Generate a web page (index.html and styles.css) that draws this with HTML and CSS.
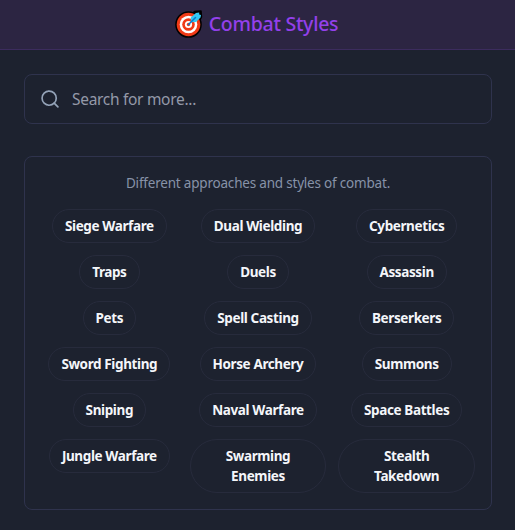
FILE: index.html
```html
<!DOCTYPE html>
<html lang="en">
<head>
  <meta charset="UTF-8">
  <meta name="viewport" content="width=device-width, initial-scale=1.0">
  <title>Combat Styles</title>
  <link rel="stylesheet" href="styles.css">
</head>
<body>
  <header class="header">
    <svg class="target" viewBox="0 0 28 28">
      <path d="M17 4 19.500 1.500 26 1 26.500 7 24.500 11" fill="#000" stroke="#000" stroke-width="1.500" stroke-linejoin="round"/>
      <circle cx="13.500" cy="14.500" r="13.300" fill="#000"/>
      <circle cx="13.500" cy="14.500" r="11.800" fill="#f03a17"/>
      <circle cx="13.500" cy="14.500" r="8.800" fill="#fff"/>
      <circle cx="13.500" cy="14.500" r="6.300" fill="#f03a17"/>
      <circle cx="13.500" cy="14.500" r="3.600" fill="#fff"/>
      <circle cx="13.500" cy="14.500" r="1.700" fill="#f03a17"/>
      <path d="M15.800 12.200V7.500L21 3 24.200 2.500V4.500L26 5 25.500 7.500 21 12Z" fill="#35c9f4"/>
      <path d="M13.500 14.500 20.500 7.500" stroke="#087bcd" stroke-width="1.500" stroke-linecap="round"/>
    </svg>
    <h1>Combat Styles</h1>
  </header>

  <main class="content">
    <!-- Search -->
    <label class="search">
      <svg class="search-icon" viewBox="0 0 24 24">
        <circle cx="11" cy="11" r="8.500"/>
        <path d="m21.500 21.500-4.500-4.500"/>
      </svg>
      <input type="text" placeholder="Search for more...">
    </label>

    <!-- Style list -->
    <section class="card">
      <p class="description">Different approaches and styles of combat.</p>
      <div class="tags">
        <button class="tag">Siege Warfare</button>
        <button class="tag">Dual Wielding</button>
        <button class="tag">Cybernetics</button>
        <button class="tag">Traps</button>
        <button class="tag">Duels</button>
        <button class="tag">Assassin</button>
        <button class="tag">Pets</button>
        <button class="tag">Spell Casting</button>
        <button class="tag">Berserkers</button>
        <button class="tag">Sword Fighting</button>
        <button class="tag">Horse Archery</button>
        <button class="tag">Summons</button>
        <button class="tag">Sniping</button>
        <button class="tag">Naval Warfare</button>
        <button class="tag">Space Battles</button>
        <button class="tag">Jungle Warfare</button>
        <button class="tag">Swarming Enemies</button>
        <button class="tag">Stealth Takedown</button>
      </div>
    </section>
  </main>
</body>
</html>
```
FILE: styles.css
```css
* {
  box-sizing: border-box;
}
body {
  margin: 0;
  min-height: 100vh;
  background-color: #1d222f;
  font-family: "Noto Sans", sans-serif;
}
.header {
  display: flex;
  justify-content: center;
  align-items: center;
  gap: 6px;
  height: 50px;
  padding: 0 2px 1px 0;
  background-color: #2c2542;
  border-bottom: 1px solid #3c2c5e;
}
.target {
  width: 28px;
  height: 28px;
}
h1 {
  margin: 0;
  color: #9340ea;
  font-size: 19.5px;
  font-weight: 500;
  line-height: 28px;
  letter-spacing: -0.25px;
}
.content {
  padding: 24px 23px 20px 24px;
}
.search {
  display: flex;
  align-items: center;
  gap: 12px;
  height: 50px;
  padding: 0 15px;
  border: 1px solid #2f334d;
  border-radius: 8px;
}
.search-icon {
  width: 20px;
  height: 20px;
  fill: none;
  stroke: #94a3b8;
  stroke-width: 2;
  stroke-linecap: round;
}
.search input {
  flex: 1;
  min-width: 0;
  padding: 0;
  border: none;
  outline: none;
  background: none;
  color: #f1f5f9;
  font-family: inherit;
  font-size: 15.5px;
  letter-spacing: -0.3px;
}
.search input::placeholder {
  color: #9499a8;
}
.card {
  margin-top: 32px;
  padding: 16px;
  border: 1px solid #2f334d;
  border-radius: 8px;
}
.description {
  margin: 0 0 16px;
  color: #8792a8;
  font-size: 13.5px;
  line-height: 20px;
  letter-spacing: -0.2px;
  text-align: center;
}
.tags {
  display: grid;
  grid-template-columns: repeat(3, 1fr);
  gap: 12px;
  justify-items: center;
  align-items: start;
}
.tag {
  padding: 6px 12px;
  border: 1px solid #272b3c;
  border-radius: 27px;
  background: none;
  color: #f4f6fa;
  font-family: inherit;
  font-size: 13.5px;
  font-weight: 700;
  line-height: 20px;
  letter-spacing: -0.38px;
  cursor: pointer;
}
```
